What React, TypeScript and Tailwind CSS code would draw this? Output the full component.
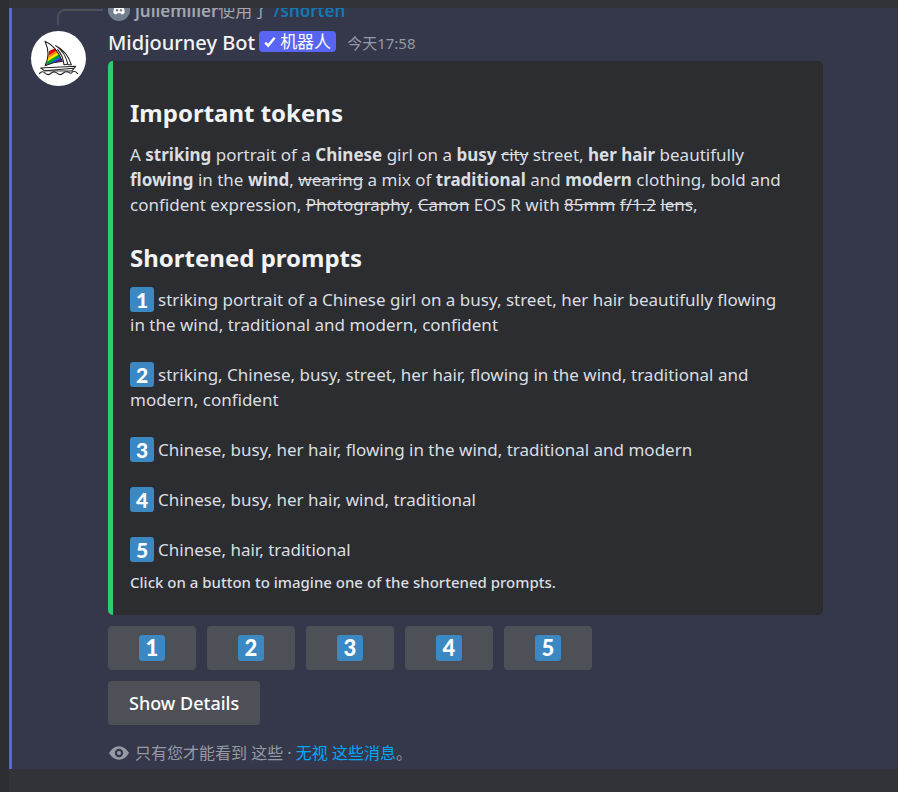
import type { ReactNode } from 'react';

const prompts = [
  'striking portrait of a Chinese girl on a busy, street, her hair beautifully flowing in the wind, traditional and modern, confident',
  'striking, Chinese, busy, street, her hair, flowing in the wind, traditional and modern, confident',
  'Chinese, busy, her hair, flowing in the wind, traditional and modern',
  'Chinese, busy, her hair, wind, traditional',
  'Chinese, hair, traditional',
];

const BoatAvatar = () => (
  <svg viewBox="0 0 165 165" className="size-[55px] shrink-0" aria-hidden="true">
    <defs>
      <clipPath id="sail">
        <path d="M54 60 L72 52 Q86 72 94 91 Q68 93 44 103 Q54 82 54 60Z" />
      </clipPath>
    </defs>
    <circle cx="82.5" cy="82.5" r="82.5" fill="#fff" />
    <g clipPath="url(#sail)" strokeWidth="9" fill="none">
      <path d="M35 76 L85 44" stroke="#e40303" strokeWidth="20" />
      <path d="M35 90 L95 52" stroke="#ff8c00" />
      <path d="M35 98 L100 57" stroke="#ffed00" />
      <path d="M35 106 L100 65" stroke="#00a030" />
      <path d="M35 115 L100 74" stroke="#1060e0" />
      <path d="M35 126 L105 82" stroke="#6a1090" strokeWidth="16" />
    </g>
    <g fill="none" stroke="#222" strokeWidth="3.2" strokeLinejoin="round" strokeLinecap="round">
      <path d="M42 31 Q76 46 94 91 Q66 94 42 104 Q60 70 42 31Z" />
      <path d="M74 44 Q108 60 121 101 L111 101 Q102 62 74 44Z" />
      <path d="M80 56 Q96 74 99 101 L109 100" />
      <path d="M29 111 L134 106 L122 120 L40 119 Z" />
      <path d="M40 119 Q80 116 128 112" />
      <path d="M25 128 Q34 117 43 127 Q52 135 61 126 Q70 119 79 127 Q88 135 97 126 Q106 119 115 125 Q121 130 126 121 Q133 119 140 128" />
    </g>
  </svg>
);

const ReplyAvatar = () => (
  <svg viewBox="0 0 22 22" className="size-[22px] shrink-0" aria-hidden="true">
    <circle cx="11" cy="11" r="11" fill="#747f8d" />
    <path
      d="M7.2 7.2 L9.3 6.6 L9.8 7.3 H12.2 L12.7 6.6 L14.8 7.2 Q16.8 10 16.6 14 Q15.3 15.1 13.6 15.4 L12.8 14.2 H9.2 L8.4 15.4 Q6.7 15.1 5.4 14 Q5.2 10 7.2 7.2Z"
      fill="#fff"
    />
    <circle cx="9" cy="11.3" r="1.2" fill="#747f8d" />
    <circle cx="13" cy="11.3" r="1.2" fill="#747f8d" />
  </svg>
);

const Keycap = ({ value, large }: { value: number; large?: boolean }) => (
  <span
    className={`inline-flex items-center justify-center rounded-[3px] bg-[#3b88c3] font-['Lato'] font-black text-white ${
      large ? 'size-[26px] text-[22px] leading-[26px]' : 'mr-1 h-[25px] w-6 align-bottom text-[21px] leading-[25px]'
    }`}
  >
    {value}
  </span>
);

const Heading = ({ children }: { children: ReactNode }) => (
  <h2 className="mb-[11px] text-[24px] leading-9 font-bold text-[#f2f3f5]">{children}</h2>
);

const Embed = () => (
  <article className="max-w-[715px] rounded-[5px] border-l-[5px] border-[#2ecc71] bg-[#2b2d31] pt-[34px] pr-[37px] pb-[22px] pl-[17px] text-[17px] leading-[25px] text-[#dbdee1]">
    <Heading>Important tokens</Heading>
    <p className="mb-[23px]">
      A <b>striking</b> portrait of a <b>Chinese</b> girl on a <b>busy</b> <s>city</s> street, <b>her hair</b>{' '}
      beautifully <b>flowing</b> in the <b>wind</b>, <s>wearing</s> a mix of <b>traditional</b> and <b>modern</b>{' '}
      clothing, bold and confident expression, <s>Photography</s>, <s>Canon</s> EOS R with <s>85mm</s> <s>f/1.2</s>{' '}
      <s>lens</s>,
    </p>
    <Heading>Shortened prompts</Heading>
    <div className="flex flex-col gap-[25px]">
      {prompts.map((prompt, i) => (
        <p key={prompt}>
          <Keycap value={i + 1} />
          {prompt}
        </p>
      ))}
    </div>
    <p className="mt-[9px] text-[15px] leading-[22px] font-medium">
      Click on a button to imagine one of the shortened prompts.
    </p>
  </article>
);

const Message = () => (
  <section className="overflow-hidden border-l-[3px] border-[#5865f2] bg-[#35374a] pb-1 pl-[19px]">
    <div className="flex h-[23px] gap-[5px] pl-[26px]">
      <div className="mt-px h-4 w-[46px] shrink-0 rounded-tl-lg border-t-2 border-l-2 border-[#4e5058]" />
      <div className="flex h-[13px] items-end gap-[5px] overflow-hidden text-[17px] leading-5 text-[#a3a6ae]">
        <ReplyAvatar />
        <span className="whitespace-nowrap">
          <span className="font-semibold">juliemiller</span>使用了{' '}
          <a href="#shorten" className="font-semibold text-[#1479b3]">
            /shorten
          </a>
        </span>
      </div>
    </div>
    <div className="flex gap-[22px]">
      <BoatAvatar />
      <div className="min-w-0 flex-1">
        <header className="mb-[6px] flex h-6 items-center">
          <h1 className="text-[20px] leading-6 font-medium text-[#f2f3f5]">Midjourney Bot</h1>
          <span className="ml-1 flex h-[21px] items-center gap-1 self-start rounded bg-[#5865f2] px-[5px] text-[17px] leading-[21px] text-white">
            <svg viewBox="0 0 12 12" className="size-3" fill="none" stroke="currentColor" strokeWidth="2.4">
              <path d="M1.2 6.6 L4.2 9.6 L10.6 1.8" />
            </svg>
            机器人
          </span>
          <time className="ml-[11px] text-[15px] leading-6 text-[#949ba4]">今天17:58</time>
        </header>
        <Embed />
        <div className="mt-[11px] flex flex-wrap gap-[11px]">
          {prompts.map((prompt, i) => (
            <button
              key={prompt}
              type="button"
              className="flex h-11 w-[88px] items-center justify-center rounded bg-[#4e5058]"
            >
              <Keycap value={i + 1} large />
            </button>
          ))}
        </div>
        <button
          type="button"
          className="mt-[11px] h-11 rounded bg-[#4e5058] px-[21px] text-[18px] leading-6 font-medium text-white"
        >
          Show Details
        </button>
        <footer className="mt-4 flex h-6 items-center gap-[5px] text-[16px] leading-6 text-[#949ba4]">
          <svg viewBox="0 0 22 22" className="size-[22px]" aria-hidden="true">
            <path
              d="M1 11 Q5 4.2 11 4.2 Q17 4.2 21 11 Q17 17.8 11 17.8 Q5 17.8 1 11Z M11 6.8 A4.2 4.2 0 1 0 11 15.2 A4.2 4.2 0 1 0 11 6.8Z"
              fill="currentColor"
              fillRule="evenodd"
            />
            <circle cx="11" cy="11" r="2" fill="currentColor" />
          </svg>
          <p>
            只有您才能看到 这些 ·{' '}
            <a href="#dismiss" className="text-[#00a8fc]">
              无视 这些消息
            </a>
            。
          </p>
        </footer>
      </div>
    </div>
  </section>
);

const App = () => (
  <div className="flex min-h-screen bg-[#313338] font-['Noto_Sans','Noto_Sans_CJK_SC',sans-serif]">
    <div className="w-[9px] shrink-0 bg-[#2b2d31]" />
    <main className="min-w-0 flex-1 pt-2">
      <Message />
    </main>
  </div>
);

export default App;
